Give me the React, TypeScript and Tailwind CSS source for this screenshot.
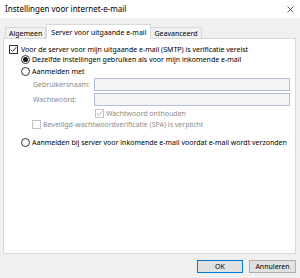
import React from "react";

const FONT = { fontFamily: '"Noto Sans", "Open Sans", sans-serif' };

function Check({ checked, disabled }: { checked?: boolean; disabled?: boolean }) {
  return (
    <span
      className={`flex items-center justify-center w-[9px] h-[9px] shrink-0 border bg-white ${
        disabled ? "border-[#c4c4c4]" : "border-[#333333]"
      }`}
    >
      {checked && (
        <svg width="7" height="7" viewBox="0 0 7 7">
          <path d="M0.8 3.6 L2.7 5.4 L6.3 1.2" fill="none" stroke={disabled ? "#a8a8a8" : "#222"} strokeWidth="0.9" />
        </svg>
      )}
    </span>
  );
}

function Radio({ checked }: { checked?: boolean }) {
  return (
    <span className="flex items-center justify-center w-[9px] h-[9px] shrink-0 rounded-full border border-[#333333] bg-white">
      {checked && <span className="w-[5px] h-[5px] rounded-full bg-[#111]" />}
    </span>
  );
}

export default function App() {
  return (
    <div className="w-[300px] h-[278px] bg-[#f0f0f0] flex flex-col overflow-hidden text-black" style={FONT}>
      {/* title bar */}
      <div className="h-[18px] bg-white flex items-center justify-between pl-[5px] pr-[6px]">
        <span className="text-[8px] leading-none">Instellingen voor internet-e-mail</span>
        <svg width="7" height="7" viewBox="0 0 7 7">
          <path d="M0.5 0.5 L6.5 6.5 M6.5 0.5 L0.5 6.5" stroke="#333" strokeWidth="0.8" />
        </svg>
      </div>

      {/* tabs */}
      <div className="mt-[5px] pl-[5px] flex items-end h-[15px] text-[7px] leading-none whitespace-nowrap">
        <div className="h-[11px] px-[3px] flex items-center border border-b-0 border-[#d9d9d9] bg-[#f0f0f0]">Algemeen</div>
        <div className="h-[15px] px-[4px] flex items-center border border-b-0 border-[#d9d9d9] bg-white -mb-px relative z-10">
          Server voor uitgaande e-mail
        </div>
        <div className="h-[11px] px-[3px] flex items-center border border-b-0 border-l-0 border-[#d9d9d9] bg-[#f0f0f0]">Geavanceerd</div>
      </div>

      {/* panel */}
      <div className="ml-[3px] w-[293px] h-[216px] bg-white border border-[#d9d9d9] pt-[5px] text-[7px] leading-none whitespace-nowrap">
        <div className="h-[10px] flex items-center pl-[5px] gap-[3px]">
          <Check checked />
          <span>Voor de server voor mijn uitgaande e-mail (SMTP) is verificatie vereist</span>
        </div>
        <div className="h-[10px] flex items-center pl-[17px] gap-[2px]">
          <Radio checked />
          <span>Dezelfde instellingen gebruiken als voor mijn inkomende e-mail</span>
        </div>
        <div className="mt-[2px] h-[10px] flex items-center pl-[17px] gap-[2px]">
          <Radio />
          <span>Aanmelden met</span>
        </div>
        <div className="mt-[2px] h-[13px] flex items-center pl-[29px] text-[#8a8a8a]">
          <span className="w-[61px]">Gebruikersnaam:</span>
          <div className="w-[196px] h-[13px] bg-[#f4f4f4] border-[1.5px] border-[#b3bfd9]" />
        </div>
        <div className="mt-[2px] h-[13px] flex items-center pl-[29px] text-[#8a8a8a]">
          <span className="w-[61px]">Wachtwoord:</span>
          <div className="w-[196px] h-[13px] bg-[#f4f4f4] border-[1.5px] border-[#b3bfd9]" />
        </div>
        <div className="mt-[2px] h-[10px] flex items-center pl-[91px] gap-[2px] text-[#8a8a8a]">
          <Check checked disabled />
          <span>Wachtwoord onthouden</span>
        </div>
        <div className="mt-[1px] h-[10px] flex items-center pl-[28px] gap-[2px] text-[#8a8a8a]">
          <Check disabled />
          <span>Beveiligd-wachtwoordverificatie (SPA) is verplicht</span>
        </div>
        <div className="mt-[8px] h-[10px] flex items-center pl-[17px] gap-[2px]">
          <Radio />
          <span>Aanmelden bij server voor inkomende e-mail voordat e-mail wordt verzonden</span>
        </div>
      </div>

      {/* buttons */}
      <div className="mt-[6px] flex justify-end gap-[6px] pr-[4px] text-[7px] leading-none">
        <button className="w-[46px] h-[13px] bg-[#e1e1e1] border border-[#0078d7] flex items-center justify-center">OK</button>
        <button className="w-[47px] h-[13px] bg-[#e1e1e1] border border-[#adadad] flex items-center justify-center">Annuleren</button>
      </div>
    </div>
  );
}
